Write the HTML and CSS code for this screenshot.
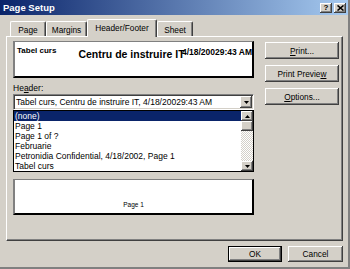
FILE: index.html
```html
<!DOCTYPE html>
<html lang="en">
<head>
    <meta charset="UTF-8">
    <title>Page Setup</title>
    <link rel="stylesheet" href="styles.css">
</head>
<body>
    <div class="window">
        <div class="titlebar">
            <span class="title">Page Setup</span>
            <div class="caption-buttons">
                <span class="cap-btn cap-help">?</span>
                <span class="cap-btn">
                    <svg width="7" height="6" viewBox="0 0 7 6"><path d="M0.5 0.5 L6.5 5.5 M6.5 0.5 L0.5 5.5" stroke="#000" stroke-width="1.6"/></svg>
                </span>
            </div>
        </div>

        <div class="dialog">
            <div class="tabs">
                <div class="tab tab-page">Page</div>
                <div class="tab tab-margins">Margins</div>
                <div class="tab tab-active">Header/Footer</div>
                <div class="tab tab-sheet">Sheet</div>
            </div>

            <div class="panel">
                <div class="left">
                    <div class="preview preview-header">
                        <span class="pv-left">Tabel curs</span>
                        <span class="pv-center">Centru de instruire IT</span>
                        <span class="pv-right">4/18/20029:43 AM</span>
                    </div>

                    <div class="field-label">He<u>a</u>der:</div>
                    <div class="combo-wrap">
                        <div class="combo">
                            <span class="combo-text">Tabel curs, Centru de instruire IT, 4/18/20029:43 AM</span>
                            <span class="raised drop-btn">
                                <svg width="5" height="3" viewBox="0 0 5 3"><path d="M0 0 H5 L2.5 3 Z" fill="#000"/></svg>
                            </span>
                        </div>
                        <div class="dropdown">
                            <ul class="items">
                                <li class="selected">(none)</li>
                                <li>Page 1</li>
                                <li>Page 1 of ?</li>
                                <li>Februarie</li>
                                <li>Petronidia Confidential, 4/18/2002, Page 1</li>
                                <li>Tabel curs</li>
                            </ul>
                            <div class="scrollbar">
                                <span class="raised sb-btn">
                                    <svg width="5" height="3" viewBox="0 0 5 3"><path d="M0 3 H5 L2.5 0 Z" fill="#000"/></svg>
                                </span>
                                <span class="raised sb-thumb"></span>
                                <span class="sb-track"></span>
                                <span class="raised sb-btn">
                                    <svg width="5" height="3" viewBox="0 0 5 3"><path d="M0 0 H5 L2.5 3 Z" fill="#000"/></svg>
                                </span>
                            </div>
                        </div>
                    </div>

                    <div class="preview preview-footer">
                        <span>Page 1</span>
                    </div>
                </div>

                <div class="right">
                    <button class="raised btn"><u>P</u>rint...</button>
                    <button class="raised btn">Print Previe<u>w</u></button>
                    <button class="raised btn"><u>O</u>ptions...</button>
                </div>
            </div>

            <div class="actions">
                <button class="raised btn btn-ok">OK</button>
                <button class="raised btn btn-cancel">Cancel</button>
            </div>
        </div>
    </div>
</body>
</html>
```

FILE: styles.css
```css
* {
    box-sizing: border-box;
}
body {
    margin: 0;
    font-family: "Liberation Sans", Arial, sans-serif;
    font-size: 8.5px;
    color: #000;
}
.window {
    width: 350px;
    height: 269px;
    background: #d4d0c8;
    border-right: 2px solid #808080;
    border-bottom: 2px solid #808080;
    overflow: hidden;
}
.titlebar {
    height: 15px;
    display: flex;
    align-items: center;
    justify-content: space-between;
    padding: 0 2px 0 3px;
    background: linear-gradient(to right, #0a246a, #a6caf0);
}
.title {
    color: #fff;
    font-weight: bold;
    font-size: 9.5px;
}
.caption-buttons {
    display: flex;
    gap: 2px;
}
.raised {
    background: #d4d0c8;
    box-shadow: inset -1px -1px #404040, inset 1px 1px #fff, inset -2px -2px #808080;
}
.cap-btn {
    width: 12px;
    height: 10px;
    display: flex;
    align-items: center;
    justify-content: center;
    background: #d4d0c8;
    box-shadow: inset -1px -1px #404040, inset 1px 1px #fff, inset -2px -2px #808080;
    font-weight: bold;
    font-size: 8px;
    line-height: 8px;
}

.dialog {
    padding: 4px 5px 0 6px;
}
.tabs {
    display: flex;
    align-items: flex-end;
    height: 17px;
    padding-left: 4px;
}
.tab {
    height: 15px;
    display: flex;
    align-items: center;
    justify-content: center;
    padding-top: 1px;
    font-size: 8.3px;
    border-top: 1px solid #fff;
    border-left: 1px solid #fff;
    border-right: 1px solid #404040;
    border-radius: 2px 2px 0 0;
    box-shadow: inset -1px 0 #808080;
}
.tab-page {
    width: 36px;
}
.tab-margins {
    width: 41px;
}
.tab-active {
    width: 70px;
    height: 18px;
    margin-bottom: -1px;
    padding-bottom: 2px;
    position: relative;
    z-index: 1;
    background: #d4d0c8;
}
.tab-sheet {
    width: 36px;
}

.panel {
    height: 205px;
    display: flex;
    gap: 11px;
    padding: 4px 3px 0 6px;
    border: 1px solid;
    border-color: #fff #404040 #404040 #fff;
    box-shadow: inset -1px -1px #808080;
}
.left {
    width: 241px;
    display: flex;
    flex-direction: column;
}
.preview {
    background: #fff;
    border-style: solid;
    border-color: #808080 #000 #000 #808080;
    border-width: 1px 2px 2px 2px;
}
.preview-header {
    height: 37px;
    display: grid;
    align-items: start;
    padding-left: 2px;
}
.preview-header span {
    grid-area: 1 / 1;
    font-weight: bold;
    white-space: nowrap;
}
.pv-left {
    justify-self: start;
    font-size: 8px;
    margin-top: 4px;
}
.pv-center {
    justify-self: center;
    font-size: 10.5px;
    margin: 6px 6px 0 0;
}
.pv-right {
    justify-self: end;
    font-size: 8.5px;
    margin-top: 5px;
}
.field-label {
    margin-top: 5px;
    height: 11px;
    line-height: 11px;
}
.combo-wrap {
    position: relative;
}
.combo {
    height: 16px;
    display: flex;
    align-items: center;
    padding: 1px;
    background: #fff;
    border: 1px solid;
    border-color: #808080 #fff #fff #808080;
    box-shadow: inset 1px 1px #404040, inset -1px -1px #d4d0c8;
}
.combo-text {
    flex: 1;
    padding-left: 1px;
    white-space: nowrap;
    overflow: hidden;
}
.drop-btn {
    width: 12px;
    height: 12px;
    display: flex;
    align-items: center;
    justify-content: center;
}
.dropdown {
    position: absolute;
    top: 100%;
    left: 0;
    right: 0;
    height: 62px;
    display: flex;
    background: #fff;
    border: 1px solid #000;
    z-index: 2;
}
.items {
    list-style: none;
    margin: 0;
    padding: 0;
    flex: 1;
}
.items li {
    height: 10px;
    line-height: 10px;
    padding-left: 1px;
    white-space: nowrap;
}
.items li.selected {
    background: #0a246a;
    color: #fff;
}
.scrollbar {
    width: 12px;
    display: flex;
    flex-direction: column;
}
.sb-btn,
.sb-thumb {
    height: 10px;
    display: flex;
    align-items: center;
    justify-content: center;
}
.sb-track {
    flex: 1;
    background: repeating-conic-gradient(#fff 0 25%, #d4d0c8 0 50%) 0 0 / 2px 2px;
}
.preview-footer {
    height: 36px;
    margin-top: 69px;
    display: flex;
    align-items: flex-end;
    justify-content: center;
    padding-bottom: 5px;
    font-size: 6.5px;
}

.right {
    width: 74px;
    display: flex;
    flex-direction: column;
    gap: 6px;
    padding-top: 1px;
}
.btn {
    height: 17px;
    padding: 0;
    border: none;
    font-family: inherit;
    font-size: 8.3px;
    color: #000;
}
.actions {
    display: flex;
    justify-content: flex-end;
    gap: 6px;
    margin-top: 5px;
}
.btn-ok {
    width: 54px;
    height: 16px;
    border: 1px solid #000;
}
.btn-cancel {
    width: 55px;
    height: 16px;
}
```
